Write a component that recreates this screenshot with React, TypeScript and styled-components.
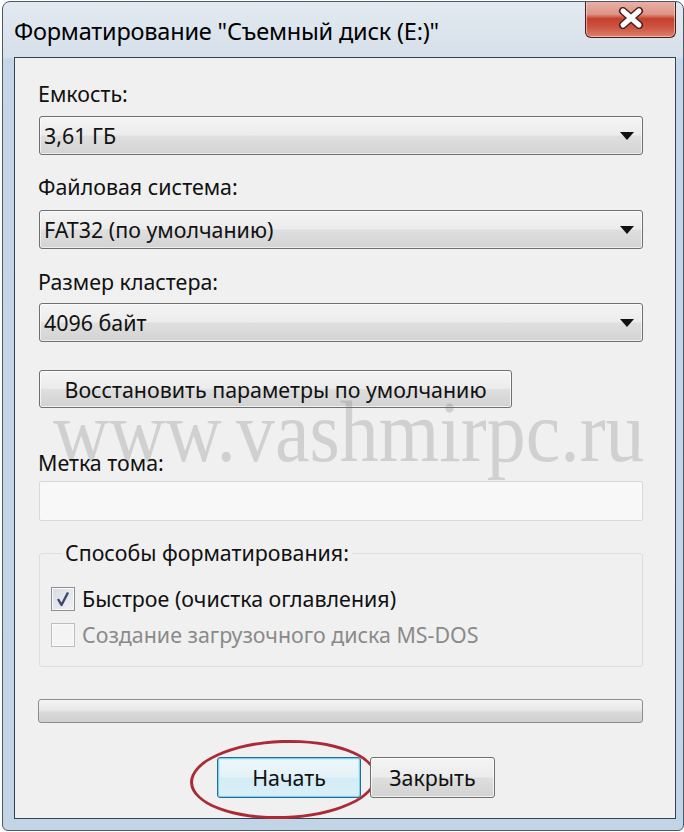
import React from "react";
import styled, { createGlobalStyle } from "styled-components";

const Global = createGlobalStyle`
  html, body { margin: 0; padding: 0; background: #ffffff; }
  body { font-family: "Noto Sans", "Open Sans", sans-serif; }
  * { box-sizing: border-box; }
`;

const Window = styled.div`
  position: relative;
  margin: 1px 0 0 2px;
  width: 682px;
  height: 830px;
  border: 1px solid #4b5866;
  border-radius: 8px 8px 6px 6px;
  background: linear-gradient(180deg, #e2e9f0 0px, #d6e0ea 56px, #c4d6e7 57px, #c2d5e6 100%);
  padding: 0 7px 11px 11px;
  display: flex;
  flex-direction: column;
  overflow: hidden;
`;

const TitleBar = styled.div`
  height: 55px;
  display: flex;
  align-items: center;
  justify-content: space-between;
`;

const Title = styled.div`
  font-size: 23.5px;
  color: #000;
  padding-top: 2px;
  letter-spacing: -0.2px;
`;

const CloseButton = styled.div`
  align-self: flex-start;
  margin-top: -3px;
  width: 91px;
  height: 39px;
  border: 1px solid #3e2020;
  border-top: none;
  border-radius: 0 0 6px 6px;
  background: linear-gradient(180deg, #eab7ad 0%, #de9486 40%, #c6402c 52%, #cd5542 75%, #dd806c 100%);
  box-shadow: inset 0 0 0 1px rgba(255, 220, 210, 0.6);
  display: flex;
  align-items: center;
  justify-content: center;
`;

const Client = styled.div`
  position: relative;
  flex: 1;
  border: 1px solid #35424f;
  background: #f0f0f0;
  padding: 24px 32px 20px 24px;
  display: flex;
  flex-direction: column;
  font-size: 21.4px;
  color: #111;
`;

const Label = styled.div<{ $mt: number }>`
  margin-top: ${(p) => p.$mt}px;
  margin-left: -1px;
  height: 24px;
  line-height: 24px;
  position: relative;
  z-index: 2;
`;

const Combo = styled.div<{ $mt: number }>`
  margin-top: ${(p) => p.$mt}px;
  height: 39px;
  border: 1px solid #707070;
  border-radius: 3px;
  background: linear-gradient(180deg, #f4f4f4 0%, #ececec 48%, #dfdfdf 52%, #d3d3d3 100%);
  box-shadow: inset 0 0 0 1px rgba(255, 255, 255, 0.6);
  display: flex;
  align-items: center;
  justify-content: space-between;
  padding: 0 8px 0 4px;
`;

const Arrow = styled.div`
  width: 0;
  height: 0;
  border-left: 7px solid transparent;
  border-right: 7px solid transparent;
  border-top: 8px solid #111;
`;

const Button = styled.div<{ $mt?: number; $w: number; $default?: boolean }>`
  margin-top: ${(p) => p.$mt ?? 0}px;
  width: ${(p) => p.$w}px;
  height: ${(p) => (p.$default !== undefined ? 41 : 38)}px;
  border: 1px solid ${(p) => (p.$default ? "#2a6a8e" : "#707070")};
  border-radius: 3px;
  background: ${(p) =>
    p.$default
      ? "linear-gradient(180deg, #eef7fb 0%, #e3f2f8 48%, #d4ecf5 52%, #d9eff7 100%)"
      : "linear-gradient(180deg, #f4f4f4 0%, #ececec 48%, #dedede 52%, #d2d2d2 100%)"};
  box-shadow: ${(p) =>
    p.$default
      ? "inset 0 0 0 1px #7fd3ef, inset 0 0 0 2px #c8eef9"
      : "inset 0 0 0 1px rgba(255,255,255,0.7)"};
  display: flex;
  align-items: center;
  justify-content: center;
  position: relative;
`;

const TextBox = styled.div`
  margin-top: 6px;
  height: 40px;
  border: 1px solid #d9d9d9;
  border-radius: 2px;
  background: #f8f8f8;
`;

const Group = styled.fieldset`
  margin: 20px 0 0 0;
  min-width: 0;
  border: 1px solid #d8dfe3;
  border-radius: 3px;
  padding: 22px 11px 19px 11px;
  display: flex;
  flex-direction: column;
  gap: 12px;
`;

const Legend = styled.legend`
  margin-left: 11px;
  padding: 0 3px;
  line-height: 24px;
  font-size: 21.4px;
`;

const CheckRow = styled.label<{ $disabled?: boolean }>`
  display: flex;
  align-items: center;
  gap: 7px;
  height: 24px;
  line-height: 24px;
  color: ${(p) => (p.$disabled ? "#8a8a8a" : "#111")};
`;

const Box = styled.span<{ $disabled?: boolean }>`
  width: 24px;
  height: 24px;
  border: 1px solid ${(p) => (p.$disabled ? "#bdbdbd" : "#8e8f8f")};
  background: ${(p) =>
    p.$disabled ? "#f4f4f4" : "linear-gradient(135deg, #d9dde6 0%, #eef0f4 100%)"};
  box-shadow: inset 0 0 0 1px #fafafa;
  display: flex;
  align-items: center;
  justify-content: center;
`;

const Progress = styled.div`
  margin-top: 32px;
  height: 24px;
  margin-left: -1px;
  border: 1px solid #8c8c8c;
  border-radius: 3px;
  background: linear-gradient(180deg, #f4f4f4 0%, #e8e8e8 45%, #dadada 55%, #d0d0d0 100%);
`;

const ButtonRow = styled.div`
  margin-top: 34px;
  display: flex;
  gap: 9px;
  padding-left: 178px;
`;

const Ellipse = styled.div`
  position: absolute;
  left: -28px;
  top: -18px;
  width: 187px;
  height: 79px;
  border: 3.5px solid #aa2a35;
  border-radius: 50%;
  transform: rotate(-2deg);
  pointer-events: none;
`;

const Watermark = styled.div`
  position: absolute;
  left: 38px;
  top: 331px;
  font-family: "Liberation Serif", serif;
  font-size: 86px;
  line-height: 1;
  color: rgba(110, 110, 110, 0.24);
  pointer-events: none;
  white-space: nowrap;
  transform: scaleX(0.905);
  transform-origin: left top;
  z-index: 1;
`;

const CloseGlyph = () => (
  <svg width="30" height="22" viewBox="0 0 30 22">
    <path d="M7 4 L23 18 M23 4 L7 18" stroke="#4a2222" strokeWidth="8" strokeLinecap="round" />
    <path d="M7 4 L23 18 M23 4 L7 18" stroke="#ffffff" strokeWidth="5" strokeLinecap="round" />
  </svg>
);

const CheckMark = () => (
  <svg width="18" height="18" viewBox="0 0 18 18">
    <path d="M4 9 L7.5 15 L14 2.5" fill="none" stroke="#3c4a68" strokeWidth="2.4" strokeLinejoin="round" />
  </svg>
);

export default function App() {
  return (
    <>
      <Global />
      <Window>
        <TitleBar>
          <Title>Форматирование "Съемный диск (E:)"</Title>
          <CloseButton>
            <CloseGlyph />
          </CloseButton>
        </TitleBar>
        <Client>
          <Watermark>www.vashmirpc.ru</Watermark>
          <Label $mt={0}>Емкость:</Label>
          <Combo $mt={10}>
            <span>3,61 ГБ</span>
            <Arrow />
          </Combo>
          <Label $mt={20}>Файловая система:</Label>
          <Combo $mt={11}>
            <span>FAT32 (по умолчанию)</span>
            <Arrow />
          </Combo>
          <Label $mt={21}>Размер кластера:</Label>
          <Combo $mt={9}>
            <span>4096 байт</span>
            <Arrow />
          </Combo>
          <Button $mt={28} $w={473}>
            Восстановить параметры по умолчанию
          </Button>
          <Label $mt={43}>Метка тома:</Label>
          <TextBox />
          <Group>
            <Legend>Способы форматирования:</Legend>
            <CheckRow>
              <Box>
                <CheckMark />
              </Box>
              Быстрое (очистка оглавления)
            </CheckRow>
            <CheckRow $disabled>
              <Box $disabled />
              Создание загрузочного диска MS-DOS
            </CheckRow>
          </Group>
          <Progress />
          <ButtonRow>
            <Button $w={144} $default={true}>
              Начать
              <Ellipse />
            </Button>
            <Button $w={125} $default={false}>
              Закрыть
            </Button>
          </ButtonRow>
        </Client>
      </Window>
    </>
  );
}
